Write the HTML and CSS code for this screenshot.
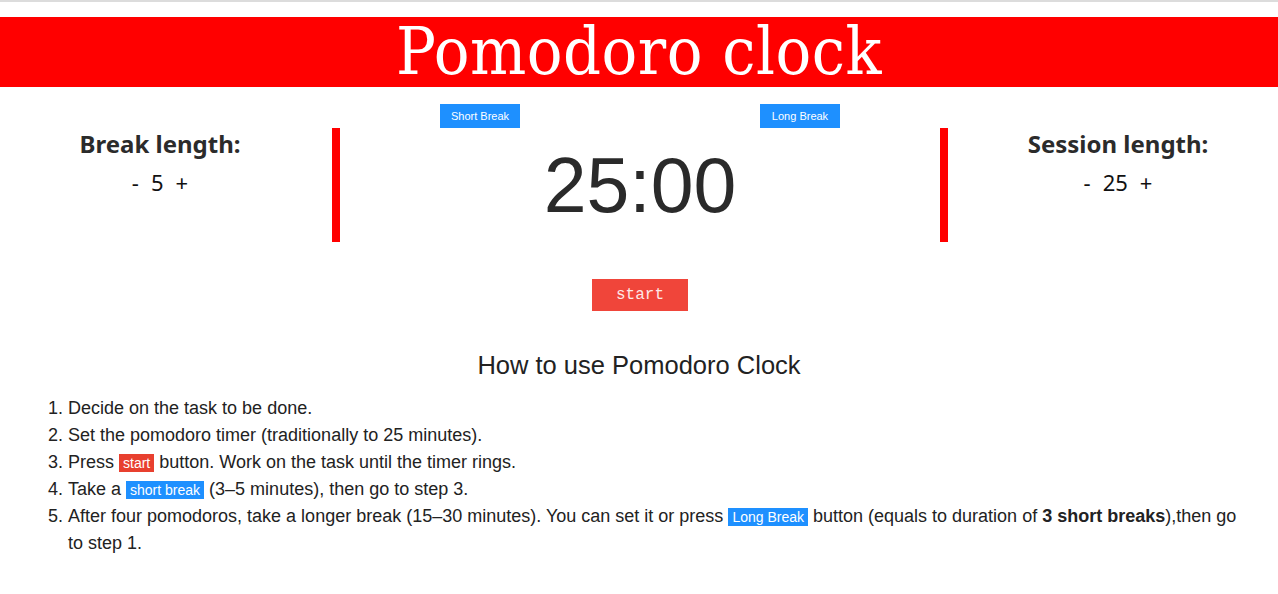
FILE: index.html
```html
<!DOCTYPE html>
<html lang="en">
<head>
<meta charset="utf-8">
<title>Pomodoro clock</title>
<link rel="stylesheet" href="styles.css">
</head>
<body>
<div class="topline"></div>
<header class="header">
  <h1 class="title">Pomodoro clock</h1>
</header>
<main class="clock-row">
  <section class="side">
    <h2 class="side-label">Break length:</h2>
    <div class="counter"><span class="ctl">-</span><span class="val">5</span><span class="ctl">+</span></div>
  </section>
  <section class="center">
    <div class="break-buttons">
      <button class="blue-btn">Short Break</button>
      <button class="blue-btn">Long Break</button>
    </div>
    <div class="timer">25:00</div>
    <div class="start-wrap"><button class="start-btn">start</button></div>
  </section>
  <section class="side">
    <h2 class="side-label">Session length:</h2>
    <div class="counter"><span class="ctl">-</span><span class="val">25</span><span class="ctl">+</span></div>
  </section>
</main>
<section class="howto">
  <h3 class="howto-title">How to use Pomodoro Clock</h3>
  <ol class="steps">
    <li>Decide on the task to be done.</li>
    <li>Set the pomodoro timer (traditionally to 25 minutes).</li>
    <li>Press <span class="tag tag-red">start</span> button. Work on the task until the timer rings.</li>
    <li>Take a <span class="tag tag-blue">short break</span> (3–5 minutes), then go to step 3.</li>
    <li>After four pomodoros, take a longer break (15–30 minutes). You can set it or press <span class="tag tag-blue">Long Break</span> button (equals to duration of <b>3 short breaks</b>),then go to step 1.</li>
  </ol>
</section>
</body>
</html>
```

FILE: styles.css
```css
html, body {
  margin: 0;
  padding: 0;
  background: #fff;
}
body {
  font-family: "Liberation Sans", Arial, sans-serif;
  color: #333;
}
.topline {
  height: 2px;
  background: #dcdcdc;
  margin-bottom: 15px;
}
.header {
  background: #ff0000;
  height: 70px;
  display: flex;
  align-items: center;
  justify-content: center;
}
.title {
  margin: 0;
  color: #fff;
  font-family: "DejaVu Serif", "Liberation Serif", serif;
  font-stretch: condensed;
  font-weight: normal;
  font-size: 66px;
  line-height: 70px;
  letter-spacing: 0.5px;
}
.clock-row {
  display: flex;
}
.side {
  width: 320px;
  flex: none;
  text-align: center;
  padding-top: 41px;
}
.side-label {
  margin: 0;
  font-family: "Noto Sans", "Open Sans", sans-serif;
  font-weight: bold;
  font-size: 24px;
  line-height: 32px;
  color: #2b2b2b;
}
.counter {
  display: flex;
  justify-content: center;
  gap: 12px;
  font-family: "Noto Sans", "Open Sans", sans-serif;
  font-size: 22px;
  line-height: 30px;
  color: #111;
  margin-top: 7px;
}
.center {
  flex: 1;
  padding: 17px 10px 0 12px;
}
.break-buttons {
  display: flex;
  justify-content: space-between;
  padding: 0 108px;
}
.blue-btn {
  width: 80px;
  height: 24px;
  border: none;
  background: #1e90ff;
  color: #fff;
  font-family: "Liberation Sans", Arial, sans-serif;
  font-size: 11px;
  padding: 0;
}
.timer {
  border-left: 8px solid #ff0000;
  border-right: 8px solid #ff0000;
  height: 114px;
  display: flex;
  align-items: center;
  justify-content: center;
  font-family: "Liberation Sans", Arial, sans-serif;
  font-size: 77px;
  color: #2a2a2a;
}
.start-wrap {
  display: flex;
  justify-content: center;
  margin-top: 37px;
}
.start-btn {
  width: 96px;
  height: 32px;
  border: none;
  background: #f0453a;
  color: #fde8e6;
  font-family: "Liberation Mono", "Courier New", monospace;
  font-size: 16px;
  padding: 0;
}
.howto {
  padding: 0 28px;
}
.howto-title {
  margin: 38px 0 14px;
  text-align: center;
  font-weight: normal;
  font-size: 25.5px;
  line-height: 32px;
  color: #222;
}
.steps {
  margin: 0;
  padding-left: 40px;
  font-size: 18px;
  line-height: 27px;
  color: #222;
}
.tag {
  display: inline-block;
  color: #fff;
  font-size: 14px;
  line-height: 18px;
  padding: 0 4px;
}
.tag-red {
  background: #e8402f;
}
.tag-blue {
  background: #1e90ff;
}
.steps b {
  font-weight: bold;
}
```
